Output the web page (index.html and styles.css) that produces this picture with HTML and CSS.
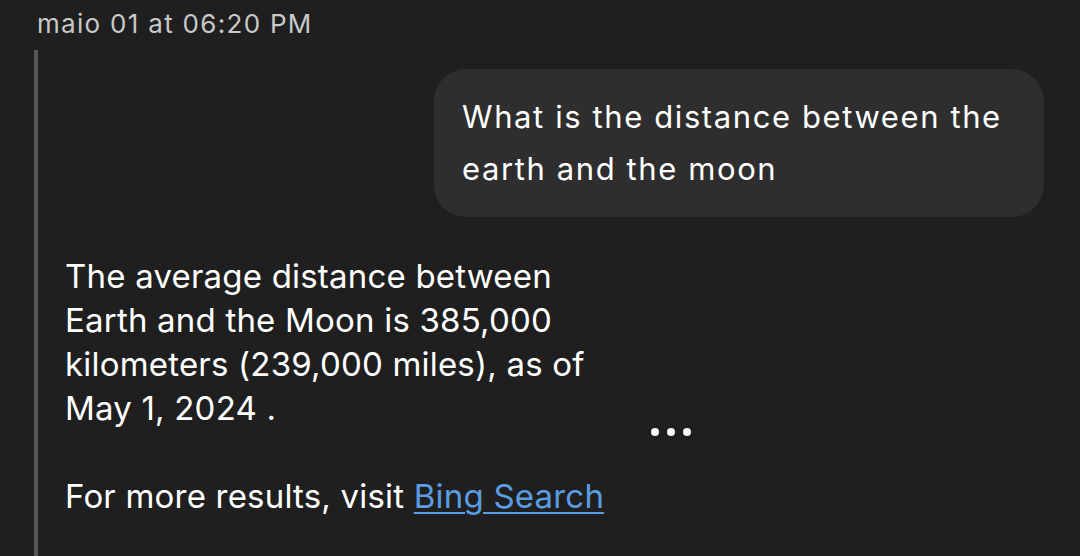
FILE: index.html
```html
<!DOCTYPE html>
<html>
<head>
<meta charset="utf-8">
<link rel="stylesheet" href="styles.css">
</head>
<body>
<div class="screen">
  <div class="timestamp">maio 01 at 06:20 PM</div>
  <div class="thread">
    <div class="rail"></div>
    <div class="messages">
      <div class="outgoing">
        <div class="bubble">What is the distance between the earth and the moon</div>
      </div>
      <div class="incoming">
        <div class="reply">
          <p>The average distance between Earth and the Moon is 385,000 kilometers (239,000 miles), as of May 1, 2024 .</p>
          <p>For more results, visit <a href="#" class="link">Bing Search</a></p>
        </div>
        <div class="typing"><span></span><span></span><span></span></div>
      </div>
    </div>
  </div>
</div>
</body>
</html>
```
FILE: styles.css
```css
* { box-sizing: border-box; }
html, body { margin: 0; padding: 0; }
body {
  background: #1f1f1f;
  font-family: "Inter", "Noto Sans", sans-serif;
  width: 1080px;
  height: 556px;
  overflow: hidden;
}
.screen { display: flex; flex-direction: column; height: 556px; overflow: hidden; }
.timestamp {
  flex-shrink: 0;
  color: #c9c9c9;
  font-size: 26px;
  letter-spacing: 1.3px;
  line-height: 28px;
  padding: 10px 0 0 37px;
  height: 50px;
}
.thread { display: flex; flex: 1; min-height: 0; }
.rail {
  width: 4px;
  margin-left: 34px;
  background: #575757;
  flex-shrink: 0;
}
.messages { flex: 1; display: flex; flex-direction: column; }
.outgoing { display: flex; justify-content: flex-end; padding: 19px 36px 0 0; }
.bubble {
  width: 610px;
  background: #2e2e2e;
  border-radius: 32px;
  color: #ffffff;
  font-size: 31px;
  letter-spacing: 1.6px;
  line-height: 52px;
  padding: 22px 16px 22px 28px;
}
.incoming { display: flex; padding: 37px 0 0 27px; }
.reply {
  width: 560px;
  color: #ffffff;
  font-size: 33px;
  letter-spacing: 0.2px;
  line-height: 44px;
}
.reply p { margin: 0 0 44px 0; }
.reply p:last-child { margin-bottom: 0; }
.link {
  color: #5b9de2;
  text-decoration: underline;
  text-underline-offset: 4px;
  text-decoration-thickness: 2px;
}
.typing { display: flex; gap: 8px; padding-top: 174px; padding-left: 26px; }
.typing span { width: 8px; height: 8px; border-radius: 50%; background: #ffffff; }
```
